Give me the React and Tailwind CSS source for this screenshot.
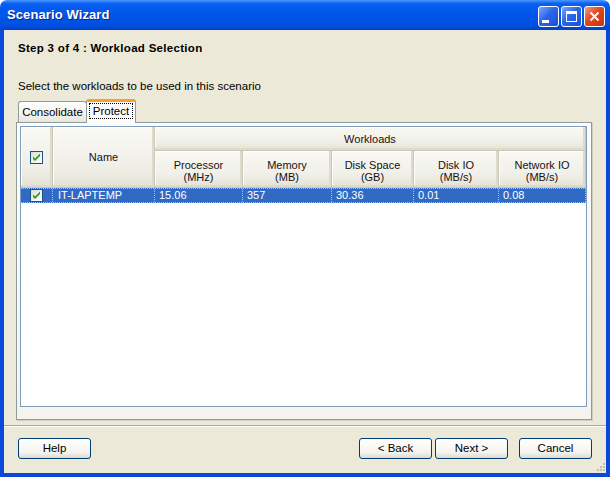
import React from 'react';

const font = { fontFamily: '"Liberation Sans", Arial, sans-serif' };

function Check() {
  return (
    <span className="inline-flex items-center justify-center w-[13px] h-[13px] border border-[#1c5180] bg-[linear-gradient(135deg,#dcdcd7,#ffffff)]">
      <svg width="9" height="9" viewBox="0 0 9 9">
        <path d="M1 3.5 L3 5.5 L8 0.5 L8 3 L3 8 L1 6 Z" fill="#21a121" />
      </svg>
    </span>
  );
}

function WinButton({ children, red }) {
  return (
    <div
      className={
        'w-[21px] h-[21px] rounded-[3px] border border-white flex items-center justify-center ' +
        (red
          ? 'bg-[linear-gradient(135deg,#f0a08a,#e0461f_45%,#c5350f)]'
          : 'bg-[linear-gradient(135deg,#7aa6ff,#2a66ea_45%,#1b4fd6)]')
      }
    >
      {children}
    </div>
  );
}

function XpButton({ children }) {
  return (
    <button
      type="button"
      className="w-[73px] h-[21px] rounded-[3px] border border-[#003c74] bg-[linear-gradient(to_bottom,#ffffff,#f4f3ee_70%,#dcdad0)] text-[11.5px] text-black flex items-center justify-center"
      style={font}
    >
      {children}
    </button>
  );
}

const hdr =
  'bg-[linear-gradient(to_bottom,#f9f9f5,#efeee6_70%,#e4e2d3)] border-r border-b border-[#c9c6b6] shadow-[inset_-2px_-2px_0_#dedbcc,inset_1px_1px_0_#ffffff] text-[#1a0f10] text-center flex items-center justify-center leading-[12px]';

const cols = [
  { label: 'Processor', unit: '(MHz)', w: 'w-[88px]', v: '15.06' },
  { label: 'Memory', unit: '(MB)', w: 'w-[89px]', v: '357' },
  { label: 'Disk Space', unit: '(GB)', w: 'w-[82px]', v: '30.36' },
  { label: 'Disk IO', unit: '(MB/s)', w: 'w-[85px]', v: '0.01' },
  { label: 'Network IO', unit: '(MB/s)', w: 'w-[87px]', v: '0.08' },
];

export default function App() {
  return (
    <div className="w-[610px] h-[477px] flex flex-col bg-white" style={font}>
      {/* title bar */}
      <div className="h-[30px] shrink-0 rounded-t-[7px] bg-[linear-gradient(to_bottom,#4a98ff,#0a5ff2_12%,#0055ea_50%,#0050e0_85%,#0042c8)] flex items-center pl-[7px] pr-[5px]">
        <span className="text-white font-bold text-[13px] tracking-[0.1px] [text-shadow:1px_1px_0_#0a2a80]">
          Scenario Wizard
        </span>
        <div className="ml-auto flex gap-[2px] mt-[3px]">
          <WinButton>
            <span className="w-[7px] h-[3px] bg-white mt-[10px] mr-[6px]" />
          </WinButton>
          <WinButton>
            <span className="w-[11px] h-[11px] border border-white border-t-[3px]" />
          </WinButton>
          <WinButton red>
            <svg width="11" height="11" viewBox="0 0 11 11">
              <path d="M1.5 1.5 L9.5 9.5 M9.5 1.5 L1.5 9.5" stroke="white" strokeWidth="2" />
            </svg>
          </WinButton>
        </div>
      </div>

      {/* frame + body */}
      <div className="flex-1 border-x-4 border-b-4 border-x-[#0b47db] border-b-[#0b47db] flex">
        <div className="relative flex-1 bg-[#ece9d8] flex flex-col">
          <div className="ml-[14px] mt-[12px] h-[13px] leading-[13px] text-[11.5px] tracking-[0.3px] font-bold text-black">
            Step 3 of 4 : Workload Selection
          </div>
          <div className="ml-[14px] mt-[25px] h-[13px] leading-[13px] text-[11.5px] text-black">
            Select the workloads to be used in this scenario
          </div>

          {/* tabs */}
          <div className="ml-[14px] mt-[6px] h-[23px] flex items-end">
            <div className="w-[69px] h-[21px] rounded-t-[3px] border border-b-0 border-[#919b9c] bg-[linear-gradient(to_bottom,#ffffff,#f3f3ef_60%,#e6e5dd)] text-[11.5px] flex items-center justify-center pt-[2px]">
              Consolidate
            </div>
            <div className="relative z-10 w-[50px] h-[24px] -mb-[1px] -ml-[1px] rounded-t-[3px] border border-b-0 border-[#919b9c] border-t-[3px] border-t-[#f6a22a] bg-[#fcfcfe] flex items-start justify-center pt-[1px]">
              <span className="text-[11.5px] leading-[14px] px-[3px] border border-dotted border-black">Protect</span>
            </div>
          </div>

          {/* tab page */}
          <div className="ml-[12px] w-[576px] h-[298px] border border-[#919b9c] bg-[linear-gradient(to_bottom,#fcfcfe,#f4f3ee)] pl-[3px] pt-[3px] shadow-[1px_1px_0_#d0cec2]">
            <div className="w-[567px] h-[281px] border border-[#7f9db9] bg-white text-[11px] flex flex-col">
              {/* header */}
              <div className="flex h-[61px]">
                <div className={hdr + ' w-[32px]'}>
                  <Check />
                </div>
                <div className={hdr + ' w-[102px]'}>Name</div>
                <div className="flex flex-col">
                  <div className={hdr + ' h-[24px]'}>Workloads</div>
                  <div className="flex h-[37px]">
                    {cols.map((c) => (
                      <div key={c.label} className={hdr + ' ' + c.w + ' flex-col pt-[3px]'}>
                        <span>{c.label}</span>
                        <span>{c.unit}</span>
                      </div>
                    ))}
                  </div>
                </div>
              </div>

              {/* row */}
              <div className="flex h-[15px] bg-[#316ac5] text-white border-y border-dotted border-[#a9c0e8] leading-[13px]">
                <div className="w-[32px] flex items-center justify-center border-r border-dotted border-[#a9c0e8]">
                  <Check />
                </div>
                <div className="w-[102px] pl-[5px] border-r border-dotted border-[#a9c0e8]">IT-LAPTEMP</div>
                {cols.map((c) => (
                  <div key={c.label} className={c.w + ' pl-[4px] border-r border-dotted border-[#a9c0e8]'}>
                    {c.v}
                  </div>
                ))}
              </div>
            </div>
          </div>

          {/* separator */}
          <div className="mt-[5px] h-[2px] border-t border-[#aca899] border-b border-b-white" />

          {/* buttons */}
          <div className="mt-[11px] flex items-center pl-[14px] pr-[14px]">
            <XpButton>Help</XpButton>
            <div className="ml-auto flex gap-[3px]">
              <XpButton>&lt; Back</XpButton>
              <XpButton>Next &gt;</XpButton>
            </div>
            <div className="ml-[11px]">
              <XpButton>Cancel</XpButton>
            </div>
          </div>

          {/* resize grip */}
          <svg className="absolute right-[1px] bottom-[1px]" width="10" height="10" viewBox="0 0 10 10">
            {[
              [8, 0], [8, 3], [5, 3], [8, 6], [5, 6], [2, 6],
            ].map(([x, y]) => (
              <rect key={x + '-' + y} x={x} y={y + 1} width="2" height="2" fill="#c2bfb0" />
            ))}
          </svg>
        </div>
      </div>
    </div>
  );
}
